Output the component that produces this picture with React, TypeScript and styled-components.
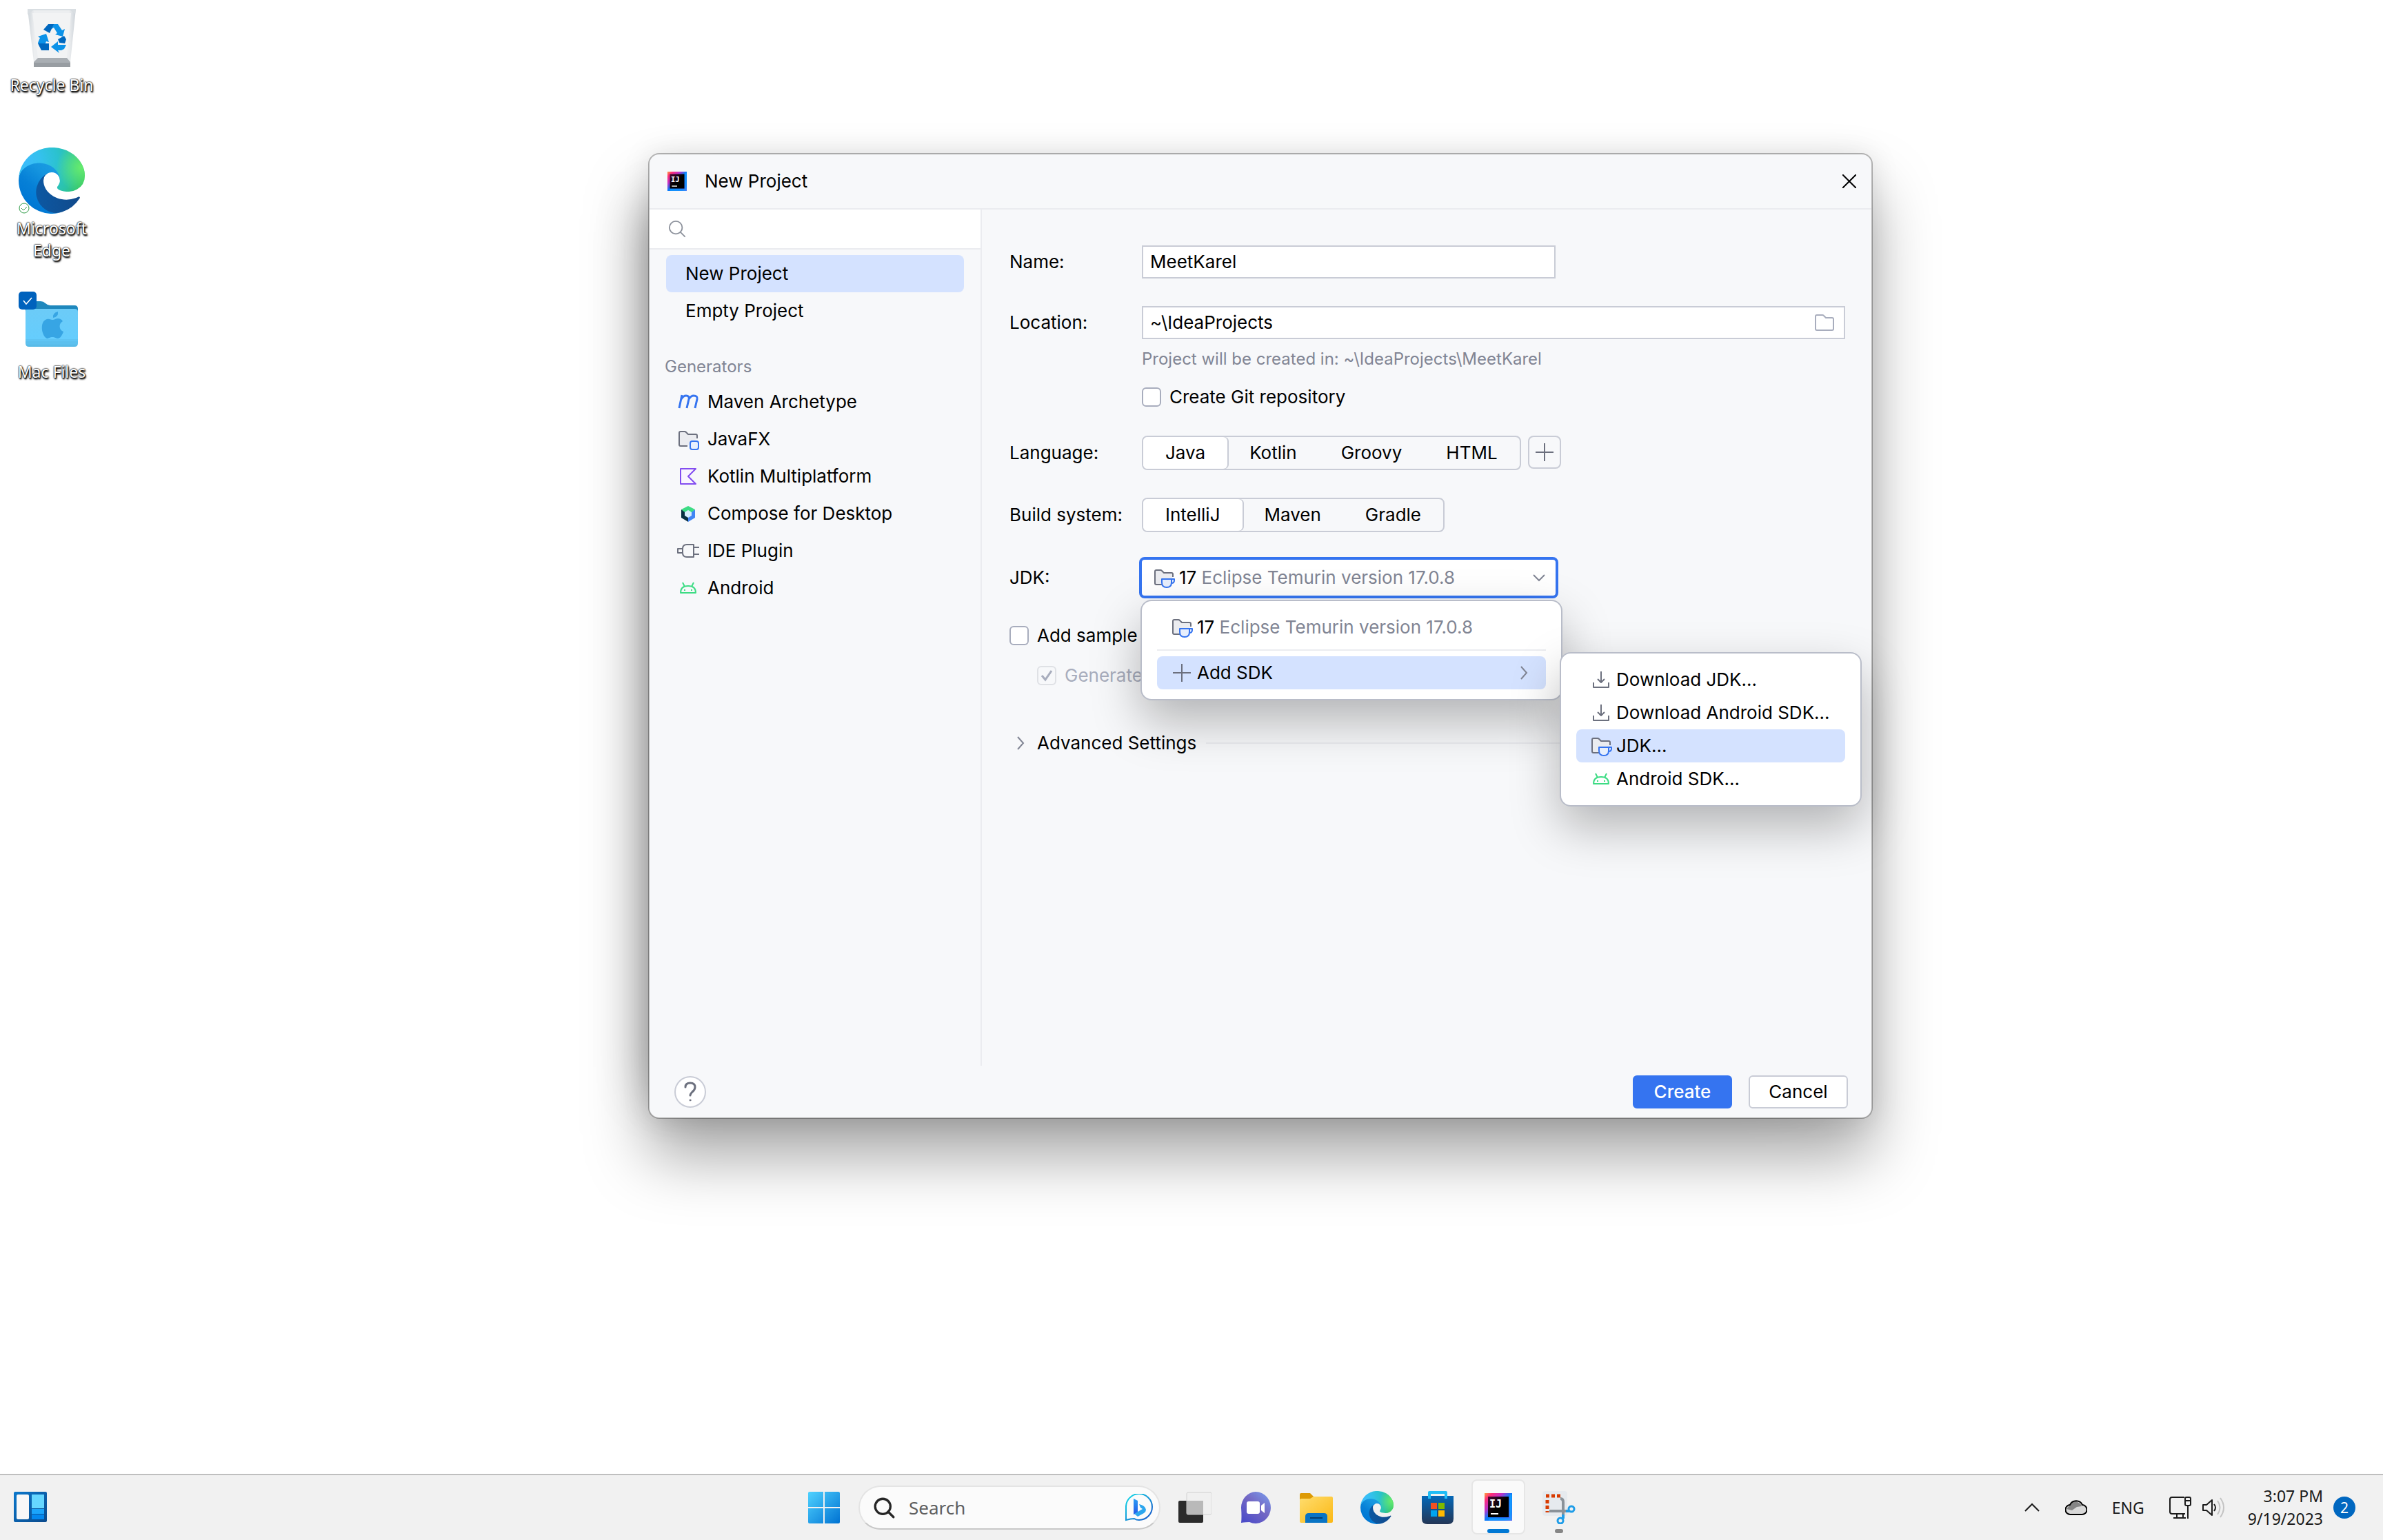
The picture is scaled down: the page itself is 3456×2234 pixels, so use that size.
import React, { useState } from 'react';
import styled, { createGlobalStyle, css } from 'styled-components';

const ui = `Inter, 'Liberation Sans', sans-serif`;
const shell = `'Noto Sans', 'Open Sans', sans-serif`;

const color = {
  text: '#000000',
  muted: '#818594',
  disabled: '#a8adbd',
  panel: '#f7f8fa',
  line: '#ebecf0',
  border: '#c9ccd6',
  popupBorder: '#b9bdc9',
  selection: '#d4e2ff',
  accent: '#3574f0',
  icon: '#6c707e',
};

const GlobalStyle = createGlobalStyle`
  *, *::before, *::after { box-sizing: border-box; }
  body { margin: 0; background: #ffffff; }
  button, input, select { font: inherit; color: inherit; margin: 0; }
  button { background: none; border: 0; padding: 0; text-align: left; cursor: default; }
  svg { display: block; flex: none; }
`;

/* ---------- desktop ---------- */

const Screen = styled.div`
  display: flex;
  flex-direction: column;
  min-height: 100vh;
  overflow: hidden;
`;

const Desktop = styled.main`
  position: relative;
  flex: 1;
`;

const Shortcuts = styled.div`
  display: flex;
  flex-direction: column;
  width: 150px;
`;

const Shortcut = styled.button`
  display: flex;
  flex-direction: column;
  align-items: center;
  gap: 5px;
  height: 208px;
  padding: 6px 14px 0;
  font: 23px/32px ${shell};
  text-align: center;
  color: #ffffff;
  text-shadow: 0 0 2px #000, 0 0 2px #000, 1px 2px 2px #000, 1px 2px 3px rgba(0, 0, 0, 0.7);
`;

const ShortcutIcon = styled.span`
  position: relative;
  display: flex;
  width: 96px;
  height: 96px;
`;

const ShortcutLabel = styled.span<{ $wide?: boolean }>`
  white-space: ${(p) => (p.$wide ? 'nowrap' : 'normal')};
`;

/* ---------- dialog ---------- */

const Dialog = styled.section`
  position: absolute;
  left: 940px;
  top: 222px;
  width: 1776px;
  display: flex;
  flex-direction: column;
  background: ${color.panel};
  background-clip: padding-box;
  border: 2px solid rgba(0, 0, 0, 0.28);
  border-radius: 16px;
  box-shadow: 0 56px 90px rgba(0, 0, 0, 0.34), 0 0 40px rgba(0, 0, 0, 0.1),
    -60px 20px 70px -60px rgba(0, 0, 0, 0.26);
  font: 26px/32px ${ui};
  color: ${color.text};
`;

const TitleBar = styled.header`
  display: flex;
  align-items: center;
  gap: 26px;
  height: 80px;
  padding: 0 22px 0 26px;
  border-bottom: 2px solid ${color.line};
`;

const Title = styled.h1`
  flex: 1;
  margin: 0;
  font: inherit;
`;

const DialogBody = styled.div`
  display: flex;
  height: 1242px;
`;

const Sidebar = styled.nav`
  width: 482px;
  border-right: 2px solid ${color.line};
`;

const SearchBox = styled.label`
  display: flex;
  align-items: center;
  gap: 12px;
  height: 58px;
  padding: 0 24px 0 27px;
  background: #ffffff;
  border-bottom: 2px solid ${color.line};
`;

const SearchInput = styled.input`
  flex: 1;
  min-width: 0;
  border: 0;
  outline: 0;
  background: transparent;
`;

const SideList = styled.div`
  display: flex;
  flex-direction: column;
  padding: 8px 24px 0;
`;

const SideItem = styled.button<{ $active?: boolean; $icon?: boolean }>`
  display: flex;
  align-items: center;
  gap: 12px;
  height: 54px;
  padding-left: ${(p) => (p.$icon ? '16px' : '28px')};
  border-radius: 8px;
  background: ${(p) => (p.$active ? color.selection : 'transparent')};
`;

const SideHeading = styled.h2`
  margin: 30px 0 0 -2px;
  font: 24px/48px ${ui};
  color: ${color.muted};
`;

const Form = styled.form`
  flex: 1;
  display: flex;
  flex-direction: column;
  padding: 52px 38px 0 40px;
`;

const Row = styled.div<{ $top: number }>`
  display: grid;
  grid-template-columns: 192px 1fr;
  align-items: center;
  margin-top: ${(p) => p.$top}px;
`;

const RowLabel = styled.label`
  white-space: nowrap;
`;

const Field = styled.div<{ $width?: string }>`
  display: flex;
  align-items: center;
  width: ${(p) => p.$width ?? '100%'};
  height: 48px;
  padding: 0 14px 0 10px;
  background: #ffffff;
  border: 2px solid ${color.border};
`;

const TextInput = styled.input`
  flex: 1;
  min-width: 0;
  padding: 0;
  border: 0;
  outline: 0;
  background: transparent;
`;

const Hint = styled.p`
  margin: 14px 0 0 192px;
  font-size: 24px;
  line-height: 30px;
  color: ${color.muted};
`;

const CheckLabel = styled.label<{ $top: number; $left?: number; $disabled?: boolean }>`
  display: flex;
  align-items: center;
  align-self: flex-start;
  gap: 12px;
  height: 28px;
  margin: ${(p) => p.$top}px 0 0 ${(p) => p.$left ?? 0}px;
  white-space: nowrap;
  color: ${(p) => (p.$disabled ? color.disabled : color.text)};
`;

const CheckHolder = styled.span`
  position: relative;
  display: flex;
`;

const CheckInput = styled.input`
  appearance: none;
  width: 28px;
  height: 28px;
  border: 2px solid #a8adbd;
  border-radius: 6px;
  background: #ffffff;
  &:disabled {
    border-color: #dfe1e5;
    background: transparent;
  }
`;

const CheckMark = styled.svg`
  position: absolute;
  inset: 0;
  pointer-events: none;
`;

const Inline = styled.div`
  display: flex;
  gap: 10px;
`;

const Segments = styled.div`
  display: flex;
  height: 50px;
  border: 2px solid ${color.border};
  border-radius: 8px;
`;

const Segment = styled.label<{ $active: boolean }>`
  display: flex;
  align-items: center;
  padding: 0 32px;
  ${(p) =>
    p.$active &&
    css`
      background: #ffffff;
      border-radius: 6px;
      box-shadow: 2px 0 0 ${color.border};
    `}
`;

const HiddenRadio = styled.input`
  appearance: none;
  position: absolute;
  opacity: 0;
`;

const SquareButton = styled.button`
  display: flex;
  align-items: center;
  justify-content: center;
  width: 48px;
  height: 48px;
  border: 2px solid ${color.border};
  border-radius: 8px;
`;

const ComboHolder = styled.div`
  position: relative;
  width: 608px;
  margin-left: -4px;
`;

const Combo = styled.div`
  display: flex;
  align-items: center;
  gap: 6px;
  height: 60px;
  padding: 0 14px 0 16px;
  background: #ffffff;
  border: 4px solid ${color.accent};
  border-radius: 8px;
`;

const ComboText = styled.span`
  flex: 1;
  white-space: nowrap;
`;

const Version = styled.span`
  color: ${color.muted};
`;

const ComboSelect = styled.select`
  position: absolute;
  inset: 0;
  width: 100%;
  height: 60px;
  opacity: 0;
`;

const Popup = styled.div<{ $left: number; $top: number; $width: number }>`
  position: absolute;
  z-index: 1;
  left: ${(p) => p.$left}px;
  top: ${(p) => p.$top}px;
  width: ${(p) => p.$width}px;
  display: flex;
  flex-direction: column;
  padding: 14px 22px;
  background: #ffffff;
  border: 2px solid ${color.popupBorder};
  border-radius: 16px;
  box-shadow: 0 30px 70px rgba(0, 0, 0, 0.28);
`;

const MenuItem = styled.button<{ $active?: boolean }>`
  display: flex;
  align-items: center;
  gap: 6px;
  height: 48px;
  padding: 0 22px 0 20px;
  border-radius: 8px;
  white-space: nowrap;
  background: ${(p) => (p.$active ? color.selection : 'transparent')};
`;

const MenuText = styled.span`
  flex: 1;
`;

const MenuRule = styled.hr`
  width: 100%;
  height: 2px;
  margin: 8px 0;
  border: 0;
  background: ${color.line};
`;

const Advanced = styled.button`
  display: flex;
  align-items: center;
  gap: 14px;
  margin-top: 68px;
  padding-left: 6px;
  white-space: nowrap;
  &::after {
    content: '';
    flex: 1;
    height: 2px;
    background: ${color.line};
  }
`;

const Footer = styled.footer`
  display: flex;
  align-items: center;
  gap: 24px;
  height: 75px;
  padding: 0 34px 0 36px;
`;

const HelpButton = styled.button`
  display: flex;
  align-items: center;
  justify-content: center;
  width: 46px;
  height: 46px;
  margin-right: auto;
  border: 2px solid ${color.border};
  border-radius: 50%;
  background: #ffffff;
`;

const ActionButton = styled.button<{ $primary?: boolean }>`
  width: 144px;
  height: 48px;
  border-radius: 6px;
  text-align: center;
  border: 2px solid ${(p) => (p.$primary ? color.accent : color.border)};
  background: ${(p) => (p.$primary ? color.accent : '#ffffff')};
  color: ${(p) => (p.$primary ? '#ffffff' : color.text)};
  font-weight: ${(p) => (p.$primary ? 500 : 400)};
`;

/* ---------- taskbar ---------- */

const Taskbar = styled.footer`
  display: grid;
  grid-template-columns: 1fr auto 1fr;
  height: 96px;
  background: #f1f1f1;
  border-top: 2px solid #bfbfbf;
  font: 23px/33px ${shell};
  color: #1b1b1b;
`;

const WidgetArea = styled.div`
  display: flex;
  align-items: center;
  padding-left: 20px;
`;

const Pins = styled.div`
  display: flex;
  align-items: center;
`;

const Pin = styled.button`
  position: relative;
  display: flex;
  align-items: center;
  justify-content: center;
  width: 88px;
  height: 94px;
`;

const ActiveTile = styled.span`
  display: flex;
  align-items: center;
  justify-content: center;
  width: 78px;
  height: 80px;
  margin-bottom: 2px;
  border: 2px solid #e6e6e6;
  border-radius: 8px;
  background: #fafafa;
`;

const Indicator = styled.span<{ $active?: boolean }>`
  position: absolute;
  bottom: 10px;
  left: 50%;
  width: ${(p) => (p.$active ? 32 : 12)}px;
  height: 6px;
  border-radius: 3px;
  transform: translateX(-50%);
  background: ${(p) => (p.$active ? '#0078d4' : '#868686')};
`;

const TaskSearch = styled.label`
  display: flex;
  align-items: center;
  gap: 20px;
  width: 438px;
  height: 64px;
  margin: 0 6px;
  padding: 0 9px 0 20px;
  border: 2px solid #e4e4e4;
  border-bottom-color: #c8c8c8;
  border-radius: 32px;
  background: #fbfbfb;
`;

const TaskSearchInput = styled.input`
  flex: 1;
  min-width: 0;
  padding: 0;
  border: 0;
  outline: 0;
  background: transparent;
  font-size: 26px;
  &::placeholder { color: #5f5f5f; opacity: 1; }
`;

const Tray = styled.div`
  display: flex;
  align-items: center;
  justify-content: flex-end;
  padding-right: 40px;
`;

const TrayButton = styled.button<{ $gap: number }>`
  display: flex;
  align-items: center;
  gap: 16px;
  margin-right: ${(p) => p.$gap}px;
`;

const Clock = styled.time`
  margin-right: 15px;
  text-align: right;
  white-space: nowrap;
`;

const Badge = styled.span`
  width: 32px;
  height: 32px;
  border-radius: 50%;
  background: #0067c0;
  color: #ffffff;
  font-size: 21px;
  line-height: 32px;
  text-align: center;
`;

/* ---------- drawings ---------- */

const EdgeLogo = ({ size, id }: { size: number; id: string }) => (
  <svg width={size} height={size} viewBox="0 0 256 256">
    <defs>
      <linearGradient id={`${id}a`} x1="63" y1="178" x2="241" y2="178" gradientUnits="userSpaceOnUse">
        <stop offset="0" stopColor="#0c59a4" />
        <stop offset="1" stopColor="#114a8b" />
      </linearGradient>
      <linearGradient id={`${id}b`} x1="157" y1="80" x2="46" y2="220" gradientUnits="userSpaceOnUse">
        <stop offset="0" stopColor="#1b9de2" />
        <stop offset=".3" stopColor="#1595df" />
        <stop offset=".67" stopColor="#0680d7" />
        <stop offset="1" stopColor="#0078d4" />
      </linearGradient>
      <radialGradient id={`${id}c`} cx="30" cy="60" r="250" gradientUnits="userSpaceOnUse">
        <stop offset="0" stopColor="#3cbcfb" />
        <stop offset=".25" stopColor="#34c1ed" />
        <stop offset=".5" stopColor="#2bc2d0" />
        <stop offset=".75" stopColor="#2bc3a5" />
        <stop offset="1" stopColor="#36c752" />
      </radialGradient>
      <radialGradient id={`${id}d`} cx="245" cy="82" r="95" gradientUnits="userSpaceOnUse">
        <stop offset="0" stopColor="#66eb6e" />
        <stop offset="1" stopColor="#66eb6e" stopOpacity="0" />
      </radialGradient>
    </defs>
    <g transform="translate(-4.63 -4.92)">
      <path fill={`url(#${id}a)`} d="M235.68 195.46a93.73 93.73 0 0 1-10.54 4.71 101.87 101.87 0 0 1-35.9 6.46c-47.32 0-88.54-32.55-88.54-74.32A31.48 31.48 0 0 1 117.13 105c-42.8 1.8-53.8 46.4-53.8 72.53 0 73.88 68.09 81.37 82.76 81.37 7.91 0 19.84-2.3 27-4.56l1.31-.44A128.34 128.34 0 0 0 241 201.1a4 4 0 0 0-5.32-5.64Z" />
      <path fill={`url(#${id}b)`} d="M110.34 246.34A79.2 79.2 0 0 1 87.6 225a80.72 80.72 0 0 1 29.53-120c3.12-1.47 8.45-4.13 15.54-4a32.35 32.35 0 0 1 25.69 13 31.88 31.88 0 0 1 6.36 18.66c0-.21 24.46-79.6-80-79.6-43.9 0-80 41.66-80 78.21a130.15 130.15 0 0 0 12.11 56 128 128 0 0 0 156.38 67.11 75.55 75.55 0 0 1-62.78-8Z" />
      {['c', 'd'].map((g) => (
        <path key={g} fill={`url(#${id}${g})`} d="M156.94 153.78c-.81 1.05-3.3 2.5-3.3 5.66 0 2.61 1.7 5.12 4.72 7.23 14.38 10 41.49 8.68 41.56 8.68a59.56 59.56 0 0 0 30.27-8.35 61.38 61.38 0 0 0 30.43-52.88c.26-22.41-8-37.31-11.34-43.91-21.28-41.65-67.21-65.59-117.16-65.59a128 128 0 0 0-128 126.2c.48-36.54 36.8-66.05 80-66.05 3.5 0 23.46.34 42 10.07 16.34 8.58 24.9 18.94 30.85 29.21 6.18 10.67 7.28 24.15 7.28 29.52s-2.74 13.33-7.8 19.91Z" />
      ))}
    </g>
  </svg>
);

const RecycleBin = () => (
  <svg width="96" height="96" viewBox="0 0 96 96">
    <defs>
      <linearGradient id="binBody" x1="0" y1="0" x2="1" y2="0">
        <stop offset="0" stopColor="#cfd5da" />
        <stop offset=".14" stopColor="#eceef0" />
        <stop offset=".86" stopColor="#eceef0" />
        <stop offset="1" stopColor="#ccd2d8" />
      </linearGradient>
    </defs>
    <path d="M13 7h70l-8 77H22z" fill="url(#binBody)" />
    <path d="M20 13h56l-6 65H28z" fill="#f2f3f4" />
    <path d="M13 7h70l-1 7-7-5H21l-8 6z" fill="#d9dee2" />
    <path d="M22 84l6-6h42l5 6v7H22z" fill="#a9aeb3" />
    <path d="M22 85h53v6H22z" fill="#989da2" />
    <path d="M43 29h14l6 9 4-2-3 11-11-3 3-2-5-8-5 3z" fill="#0c92e8" />
    <path d="M43 29h8l-6 13-9-5z" fill="#0067be" />
    <path d="M28 47l12-4 4 12-4-1-5 13-4-5-3-6 3-7z" fill="#0c92e8" />
    <path d="M28 57h16v10H33z" fill="#0067be" />
    <path d="M59 71l-12-9 10-8v5h12l-3 6-4 2h-5z" fill="#0c92e8" />
    <path d="M57 51l9-5 3 5-2 6-8-1z" fill="#0067be" />
  </svg>
);

const SyncedBadge = styled.svg`
  position: absolute;
  left: 0;
  bottom: 0;
`;

const MacFolder = () => (
  <svg width="96" height="96" viewBox="0 0 96 96">
    <defs>
      <linearGradient id="macFront" x1="0" y1="0" x2="0" y2="1">
        <stop offset="0" stopColor="#6ccbf7" />
        <stop offset=".8" stopColor="#65cdfd" />
        <stop offset="1" stopColor="#56b7e4" />
      </linearGradient>
    </defs>
    <path d="M10 20q0-5 5-5h17q4 0 7 3t7 3h35q5 0 5 5v20H10z" fill="#1f88bd" />
    <path d="M10 30q0-4 5-4h66q5 0 5 4v46q0 5-5 5H15q-5 0-5-5z" fill="url(#macFront)" />
    <path d="M10 71h76M10 74h76" stroke="#55b3e0" strokeWidth="1" opacity=".6" />
    <path d="M57 30q1 8-7 9-1-7 7-9zM49 42c3 0 5-2 8-2 3 0 5 1 7 4-7 4-5 13 1 15-2 6-5 10-8 10s-4-2-8-2-5 2-8 2c-8-4-11-25 0-28 4-1 6 1 8 1z" fill="#37a5e4" />
    <rect x="0" y="1" width="26" height="26" rx="5" fill="#0062bd" />
    <path d="M7 14l4 5 8-9" fill="none" stroke="#fff" strokeWidth="1.6" />
  </svg>
);

const IdeaLogo = ({ size, id }: { size: number; id: string }) => (
  <svg width={size} height={size} viewBox="0 0 40 40">
    <defs>
      <linearGradient id={`${id}e`} x1="0" y1="0" x2="1" y2="1">
        <stop offset="0" stopColor="#fca23c" />
        <stop offset=".14" stopColor="#ff2d78" />
        <stop offset=".32" stopColor="#c030c8" />
        <stop offset=".5" stopColor="#087cfa" />
        <stop offset=".85" stopColor="#2a6cf6" />
        <stop offset="1" stopColor="#8a5cf0" />
      </linearGradient>
      <linearGradient id={`${id}f`} x1="0" y1="0" x2="1" y2="1">
        <stop offset="0" stopColor="#4a0a36" />
        <stop offset=".5" stopColor="#000000" />
      </linearGradient>
    </defs>
    <path d="M0 0h40v40H0z" fill={`url(#${id}e)`} />
    <path d="M38 2v36H6" fill="none" stroke="#12a4ff" strokeWidth="3" opacity=".75" />
    <path d="M5 5h30v30H5z" fill={`url(#${id}f)`} />
    <text x="7" y="21" fontFamily="'DejaVu Sans Mono', monospace" fontWeight="700" fontSize="15" fill="#fff">IJ</text>
    <path d="M9 29h11v2H9z" fill="#fff" />
  </svg>
);

const Magnifier = ({ size, stroke, width }: { size: number; stroke: string; width: number }) => (
  <svg width={size} height={size} viewBox="0 0 28 28" fill="none" stroke={stroke} strokeWidth={width} strokeLinecap="round">
    <circle cx="12" cy="12" r="10" />
    <path d="M19 19l7 7" />
  </svg>
);

type IconProps = { children: React.ReactNode; size?: number };
const Icon = ({ children, size = 32 }: IconProps) => (
  <svg width={size} height={size} viewBox="0 0 32 32" fill="none" stroke={color.icon} strokeWidth="2" strokeLinejoin="round">
    {children}
  </svg>
);

const folderPath = 'M15 26H5q-2 0-2-2V7q0-2 2-2h6q1 0 2 1l3 3h11q2 0 2 2v4';

const MavenIcon = () => (
  <Icon>
    <path d="M7 6L3 25M6 12q3-5 7-5 5 0 4 5l-3 13M17 12q3-5 7-5 6 0 5 5l-3 13" stroke="#3574f0" strokeWidth="3" />
  </Icon>
);

const ModuleIcon = () => (
  <Icon>
    <path d={folderPath} fill="#ebecf0" />
    <rect x="19" y="19" width="12" height="12" rx="3" fill="#e7effd" stroke="#3574f0" />
  </Icon>
);

const KotlinIcon = () => (
  <Icon>
    <path d="M5 5h22L16 16l11 11H5z" fill="#faf5ff" stroke="#834df0" />
  </Icon>
);

const ComposeIcon = () => (
  <Icon>
    <g stroke="none">
      <path d="M26 10v12l-10 6V16z" fill="#4285f4" />
      <path d="M6 10v12l10 6V16z" fill="#083042" />
      <path d="M16 11l5 3v5l-5 3-5-3v-5z" fill="#d7effe" />
      <path d="M6 10l5 4 5-3 5 3 5-4-10-5z" fill="#3ddc84" />
    </g>
  </Icon>
);

const PluginIcon = () => (
  <Icon>
    <path d="M8 13H1v6h7M24 11h8M24 21h8M14 7h10v18H14q-6 0-6-6v-6q0-6 6-6z" />
  </Icon>
);

const AndroidIcon = () => (
  <Icon>
    <path d="M5 23q0-10 11-10t11 10zM8 8l3 6M24 8l-3 6" stroke="#3ddc84" />
    <path d="M10 19h2M20 19h2" stroke="#3ddc84" />
  </Icon>
);

const JdkIcon = () => (
  <Icon>
    <path d={folderPath} fill="#ebecf0" />
    <path d="M13 18h14v5q0 7-7 7t-7-7zM27 18h4v2q0 4-4 4" fill="#e7effd" stroke="#3574f0" />
  </Icon>
);

const DownloadIcon = () => (
  <Icon>
    <path d="M5 20v7h22v-7M16 4v16M11 15l5 5 5-5" />
  </Icon>
);

const PlusIcon = () => (
  <Icon>
    <path d="M16 3v26M3 16h26" />
  </Icon>
);

const ChevronRight = () => (
  <svg width="20" height="24" viewBox="0 0 20 24" fill="none" stroke="#818594" strokeWidth="2">
    <path d="M6 3l8 9-8 9" />
  </svg>
);

/* ---------- page ---------- */

const generators = [
  { name: 'Maven Archetype', icon: <MavenIcon /> },
  { name: 'JavaFX', icon: <ModuleIcon /> },
  { name: 'Kotlin Multiplatform', icon: <KotlinIcon /> },
  { name: 'Compose for Desktop', icon: <ComposeIcon /> },
  { name: 'IDE Plugin', icon: <PluginIcon /> },
  { name: 'Android', icon: <AndroidIcon /> },
];

const sdkActions = [
  { name: 'Download JDK...', icon: <DownloadIcon /> },
  { name: 'Download Android SDK...', icon: <DownloadIcon /> },
  { name: 'JDK...', icon: <JdkIcon />, active: true },
  { name: 'Android SDK...', icon: <AndroidIcon /> },
];

const jdkName = 'Eclipse Temurin version 17.0.8';

const SegmentedControl = ({ name, options }: { name: string; options: string[] }) => {
  const [value, setValue] = useState(options[0]);
  return (
    <Segments role="radiogroup" aria-label={name}>
      {options.map((option) => (
        <Segment key={option} $active={option === value}>
          <HiddenRadio type="radio" name={name} checked={option === value} onChange={() => setValue(option)} />
          {option}
        </Segment>
      ))}
    </Segments>
  );
};

const NewProjectDialog = () => (
  <Dialog role="dialog" aria-label="New Project">
    <TitleBar>
      <IdeaLogo size={28} id="title" />
      <Title>New Project</Title>
      <button aria-label="Close">
        <svg width="20" height="20" viewBox="0 0 20 20" stroke="#000" strokeWidth="2">
          <path d="M0 0l20 20M20 0L0 20" />
        </svg>
      </button>
    </TitleBar>
    <DialogBody>
      <Sidebar>
        <SearchBox>
          <Magnifier size={26} stroke="#8d929c" width={2} />
          <SearchInput aria-label="Search project types" />
        </SearchBox>
        <SideList>
          <SideItem $active>New Project</SideItem>
          <SideItem>Empty Project</SideItem>
          <SideHeading>Generators</SideHeading>
          {generators.map((g) => (
            <SideItem key={g.name} $icon>
              {g.icon}
              {g.name}
            </SideItem>
          ))}
        </SideList>
      </Sidebar>
      <Form>
        <Row $top={0}>
          <RowLabel htmlFor="name">Name:</RowLabel>
          <Field $width="600px">
            <TextInput id="name" defaultValue="MeetKarel" />
          </Field>
        </Row>
        <Row $top={40}>
          <RowLabel htmlFor="location">Location:</RowLabel>
          <Field>
            <TextInput id="location" defaultValue="~\IdeaProjects" />
            <svg width="28" height="24" viewBox="0 0 28 24" fill="none" stroke="#a8adbd" strokeWidth="2">
              <path d="M1 3q0-2 2-2h8q1 0 2 1l3 3h9q2 0 2 2v14q0 2-2 2H3q-2 0-2-2z" />
            </svg>
          </Field>
        </Row>
        <Hint>Project will be created in: ~\IdeaProjects\MeetKarel</Hint>
        <CheckLabel $top={26} $left={192}>
          <CheckInput type="checkbox" />
          Create Git repository
        </CheckLabel>
        <Row $top={42}>
          <RowLabel as="span">Language:</RowLabel>
          <Inline>
            <SegmentedControl name="Language" options={['Java', 'Kotlin', 'Groovy', 'HTML']} />
            <SquareButton type="button" aria-label="Add language">
              <PlusIcon />
            </SquareButton>
          </Inline>
        </Row>
        <Row $top={40}>
          <RowLabel as="span">Build system:</RowLabel>
          <Inline>
            <SegmentedControl name="Build system" options={['IntelliJ', 'Maven', 'Gradle']} />
          </Inline>
        </Row>
        <Row $top={36}>
          <RowLabel htmlFor="jdk">JDK:</RowLabel>
          <ComboHolder>
            <Combo>
              <JdkIcon />
              <ComboText>
                17 <Version>{jdkName}</Version>
              </ComboText>
              <svg width="20" height="20" viewBox="0 0 20 20" fill="none" stroke="#818594" strokeWidth="2">
                <path d="M2 6l8 8 8-8" />
              </svg>
            </Combo>
            <ComboSelect id="jdk">
              <option>17 {jdkName}</option>
            </ComboSelect>
            <Popup role="menu" $left={2} $top={62} $width={612}>
              <MenuItem type="button" role="menuitem">
                <JdkIcon />
                <MenuText>
                  17 <Version>{jdkName}</Version>
                </MenuText>
              </MenuItem>
              <MenuRule />
              <MenuItem type="button" role="menuitem" $active>
                <PlusIcon />
                <MenuText>Add SDK</MenuText>
                <ChevronRight />
              </MenuItem>
            </Popup>
            <Popup role="menu" $left={610} $top={138} $width={438}>
              {sdkActions.map((a) => (
                <MenuItem key={a.name} type="button" role="menuitem" $active={a.active}>
                  {a.icon}
                  <MenuText>{a.name}</MenuText>
                </MenuItem>
              ))}
            </Popup>
          </ComboHolder>
        </Row>
        <CheckLabel $top={40}>
          <CheckInput type="checkbox" />
          Add sample code
        </CheckLabel>
        <CheckLabel $top={30} $left={40} $disabled>
          <CheckHolder>
            <CheckInput type="checkbox" defaultChecked disabled />
            <CheckMark width="28" height="28" viewBox="0 0 28 28" fill="none" stroke="#a8adbd" strokeWidth="3">
              <path d="M7 14l5 6 9-13" />
            </CheckMark>
          </CheckHolder>
          Generate code
        </CheckLabel>
        <Advanced type="button">
          <ChevronRight />
          Advanced Settings
        </Advanced>
      </Form>
    </DialogBody>
    <Footer>
      <HelpButton aria-label="Help">
        <svg width="20" height="30" viewBox="0 0 20 30" fill="none" stroke={color.icon} strokeWidth="3" strokeLinecap="round">
          <path d="M3 8q0-6 7-6t7 6q0 4-4 7-3 3-3 5" />
          <circle cx="10" cy="27" r="1" fill={color.icon} strokeWidth="1" />
        </svg>
      </HelpButton>
      <ActionButton $primary>Create</ActionButton>
      <ActionButton>Cancel</ActionButton>
    </Footer>
  </Dialog>
);

const WindowsTaskbar = () => (
  <Taskbar>
    <WidgetArea>
      <button aria-label="Widgets">
        <svg width="48" height="48" viewBox="0 0 48 48">
          <defs>
            <linearGradient id="widgets" x1="0" y1="0" x2="1" y2="1">
              <stop offset="0" stopColor="#0b78cc" />
              <stop offset="1" stopColor="#0b4a8c" />
            </linearGradient>
          </defs>
          <rect x="0" y="1" width="48" height="44" rx="2" fill="url(#widgets)" />
          <rect x="4" y="5" width="18" height="36" rx="2" fill="#f8f8f8" />
          <rect x="26" y="5" width="18" height="20" fill="#66d7ff" />
          <rect x="26" y="26" width="18" height="7" fill="#1ba5fb" />
          <rect x="26" y="34" width="18" height="7" fill="#0488ee" />
        </svg>
      </button>
    </WidgetArea>
    <Pins>
      <Pin aria-label="Start">
        <svg width="46" height="46" viewBox="0 0 46 46">
          <defs>
            <linearGradient id="win" x1="0" y1="0" x2="46" y2="46" gradientUnits="userSpaceOnUse">
              <stop offset="0" stopColor="#4fd2ff" />
              <stop offset="1" stopColor="#0072d2" />
            </linearGradient>
          </defs>
          <path d="M2 0h20v22H0V2q0-2 2-2zM24 0h20q2 0 2 2v20H24zM0 24h22v22H2q-2 0-2-2zM24 24h22v20q0 2-2 2H24z" fill="url(#win)" />
        </svg>
      </Pin>
      <TaskSearch>
        <Magnifier size={31} stroke="#262626" width={3} />
        <TaskSearchInput placeholder="Search" aria-label="Search" />
        <svg width="40" height="40" viewBox="0 0 40 40" fill="none">
          <defs>
            <linearGradient id="bing" x1="0" y1="0" x2="1" y2="1">
              <stop offset="0" stopColor="#10e0e8" />
              <stop offset="1" stopColor="#1850c8" />
            </linearGradient>
            <linearGradient id="bingB" x1="0" y1="0" x2="0" y2="1">
              <stop offset="0" stopColor="#2a9cf4" />
              <stop offset="1" stopColor="#2458e8" />
            </linearGradient>
          </defs>
          <path d="M1 38V20A19 19 0 1 1 20 38q-4 0-7-2-5 0-12 2z" stroke="url(#bing)" strokeWidth="2" />
          <path d="M12 7l6 3v17l-6 3z" fill="url(#bingB)" />
          <path d="M13 29l12-7-3-2-2-5q9 2 10 8 0 3-3 5l-9 5z" fill="#2ca6ee" />
        </svg>
      </TaskSearch>
      <Pin aria-label="Task view">
        <svg width="48" height="48" viewBox="0 0 48 48">
          <rect x="0" y="14" width="36" height="32" rx="2" fill="#2b2b2b" />
          <rect x="12" y="2" width="36" height="32" rx="2" fill="#f0f0f0" stroke="#d0d0d0" strokeWidth="1" />
          <path d="M12 14h24v20H12z" fill="#b9b9b9" />
        </svg>
      </Pin>
      <Pin aria-label="Chat">
        <svg width="48" height="48" viewBox="0 0 48 48">
          <defs>
            <linearGradient id="chat" x1="1" y1="0" x2=".2" y2="1">
              <stop offset="0" stopColor="#7aa0f0" />
              <stop offset=".5" stopColor="#7468c4" />
              <stop offset="1" stopColor="#4c4cc8" />
            </linearGradient>
          </defs>
          <path d="M24 1a22 23 0 1 1-9 44q-4 0-12 1 1-8 0-22A22 23 0 0 1 24 1z" fill="url(#chat)" />
          <rect x="11" y="15" width="19" height="18" rx="3" fill="#fff" />
          <path d="M32 21l5-4v15l-5-4z" fill="#fff" />
        </svg>
      </Pin>
      <Pin aria-label="File Explorer">
        <svg width="48" height="48" viewBox="0 0 48 48">
          <defs>
            <linearGradient id="explorer" x1="0" y1="0" x2="1" y2="1">
              <stop offset="0" stopColor="#ffdd6e" />
              <stop offset="1" stopColor="#fbb815" />
            </linearGradient>
          </defs>
          <path d="M0 5q0-2 2-2h13l5 5v6H0z" fill="#dd9a05" />
          <path d="M0 12l2-1h13l5-3h26q2 0 2 2v34q0 2-2 2H2q-2 0-2-2z" fill="url(#explorer)" />
          <path d="M8 46V37q0-5 5-5h22q5 0 5 5v9z" fill="#0a74c4" />
          <path d="M15 39h18" stroke="#053f70" strokeWidth="2" />
        </svg>
      </Pin>
      <Pin aria-label="Edge">
        <EdgeLogo size={48} id="pin" />
      </Pin>
      <Pin aria-label="Store">
        <svg width="48" height="48" viewBox="0 0 48 48">
          <defs>
            <linearGradient id="store" x1="0" y1="0" x2="0" y2="1">
              <stop offset="0" stopColor="#0468b8" />
              <stop offset="1" stopColor="#243656" />
            </linearGradient>
          </defs>
          <path d="M1 7h46v33q0 8-8 8H9q-8 0-8-8z" fill="url(#store)" />
          <path d="M12 11V2h24v9" fill="none" stroke="#20bdf5" strokeWidth="4" strokeLinejoin="round" />
          <path d="M14 17h9v9h-9z" fill="#f25022" />
          <path d="M25 17h9v9h-9z" fill="#7fba00" />
          <path d="M14 28h9v9h-9z" fill="#00a4ef" />
          <path d="M25 28h9v9h-9z" fill="#ffb900" />
        </svg>
      </Pin>
      <Pin aria-label="IntelliJ IDEA">
        <ActiveTile>
          <IdeaLogo size={40} id="task" />
        </ActiveTile>
        <Indicator $active />
      </Pin>
      <Pin aria-label="Snipping Tool">
        <svg width="48" height="48" viewBox="0 0 48 48" fill="none">
          <rect x="0" y="0" width="36" height="36" rx="4" fill="#e6eaee" />
          <path d="M5 7h21" stroke="#d83b01" strokeWidth="5" strokeDasharray="5 3" />
          <path d="M7 13v18" stroke="#d83b01" strokeWidth="5" strokeDasharray="5 3" />
          <path d="M26 11q4 0 4 5v20" stroke="#8a9299" strokeWidth="4" />
          <path d="M10 29h26" stroke="#8a9299" strokeWidth="4" />
          <circle cx="42" cy="26" r="4" stroke="#1f9de8" strokeWidth="3" />
          <circle cx="26" cy="43" r="4" stroke="#1f9de8" strokeWidth="3" />
          <path d="M34 29h5M30 34v6" stroke="#1f9de8" strokeWidth="4" />
        </svg>
        <Indicator />
      </Pin>
    </Pins>
    <Tray>
      <TrayButton $gap={36} aria-label="Show hidden icons">
        <svg width="24" height="14" viewBox="0 0 24 14" fill="none" stroke="#1b1b1b" strokeWidth="2">
          <path d="M2 12L12 2l10 10" />
        </svg>
      </TrayButton>
      <TrayButton $gap={36} aria-label="OneDrive">
        <svg width="32" height="24" viewBox="0 0 32 24">
          <path d="M8 22a7 7 0 0 1-1-14 10 10 0 0 1 18 0 7 7 0 0 1-1 14z" fill="#d8d8d8" />
          <path d="M6 9q6-9 12-5 5 2 6 6l-7 1-7 5-8-2z" fill="#858585" />
          <path d="M8 22a7 7 0 0 1-1-14 10 10 0 0 1 18 0 7 7 0 0 1-1 14z" fill="none" stroke="#000" strokeWidth="2" />
        </svg>
      </TrayButton>
      <TrayButton $gap={36}>ENG</TrayButton>
      <TrayButton $gap={32} aria-label="Network and volume">
        <svg width="32" height="34" viewBox="0 0 32 34" fill="none" stroke="#1b1b1b" strokeWidth="2">
          <path d="M22 2H4Q1 2 1 5v18q0 3 3 3h19M11 26v6M20 26v6M6 32h18M27 14v19" />
          <rect x="23" y="2" width="8" height="12" rx="2" />
          <path d="M23 7h8" />
        </svg>
        <svg width="34" height="30" viewBox="0 0 34 30" fill="none" stroke="#1b1b1b" strokeWidth="2" strokeLinejoin="round">
          <path d="M1 11h5l8-7v22l-8-7H1zM17 10q4 5 0 10" />
          <path d="M22 5q7 10 0 20M26 1q10 14 0 28" stroke="#c3c3c3" />
        </svg>
      </TrayButton>
      <Clock>
        3:07 PM
        <br />
        9/19/2023
      </Clock>
      <Badge>2</Badge>
    </Tray>
  </Taskbar>
);

export default function App() {
  return (
    <Screen>
      <GlobalStyle />
      <Desktop>
        <Shortcuts>
          <Shortcut>
            <ShortcutIcon>
              <RecycleBin />
            </ShortcutIcon>
            <ShortcutLabel $wide>Recycle Bin</ShortcutLabel>
          </Shortcut>
          <Shortcut>
            <ShortcutIcon>
              <EdgeLogo size={96} id="desk" />
              <SyncedBadge width="16" height="16" viewBox="0 0 16 16" fill="none" stroke="#2e9b46">
                <circle cx="8" cy="8" r="7" fill="#fff" strokeWidth="1" />
                <path d="M4 8l3 3 5-5" strokeWidth="1" />
              </SyncedBadge>
            </ShortcutIcon>
            <ShortcutLabel>Microsoft Edge</ShortcutLabel>
          </Shortcut>
          <Shortcut>
            <ShortcutIcon>
              <MacFolder />
            </ShortcutIcon>
            <ShortcutLabel $wide>Mac Files</ShortcutLabel>
          </Shortcut>
        </Shortcuts>
        <NewProjectDialog />
      </Desktop>
      <WindowsTaskbar />
    </Screen>
  );
}
